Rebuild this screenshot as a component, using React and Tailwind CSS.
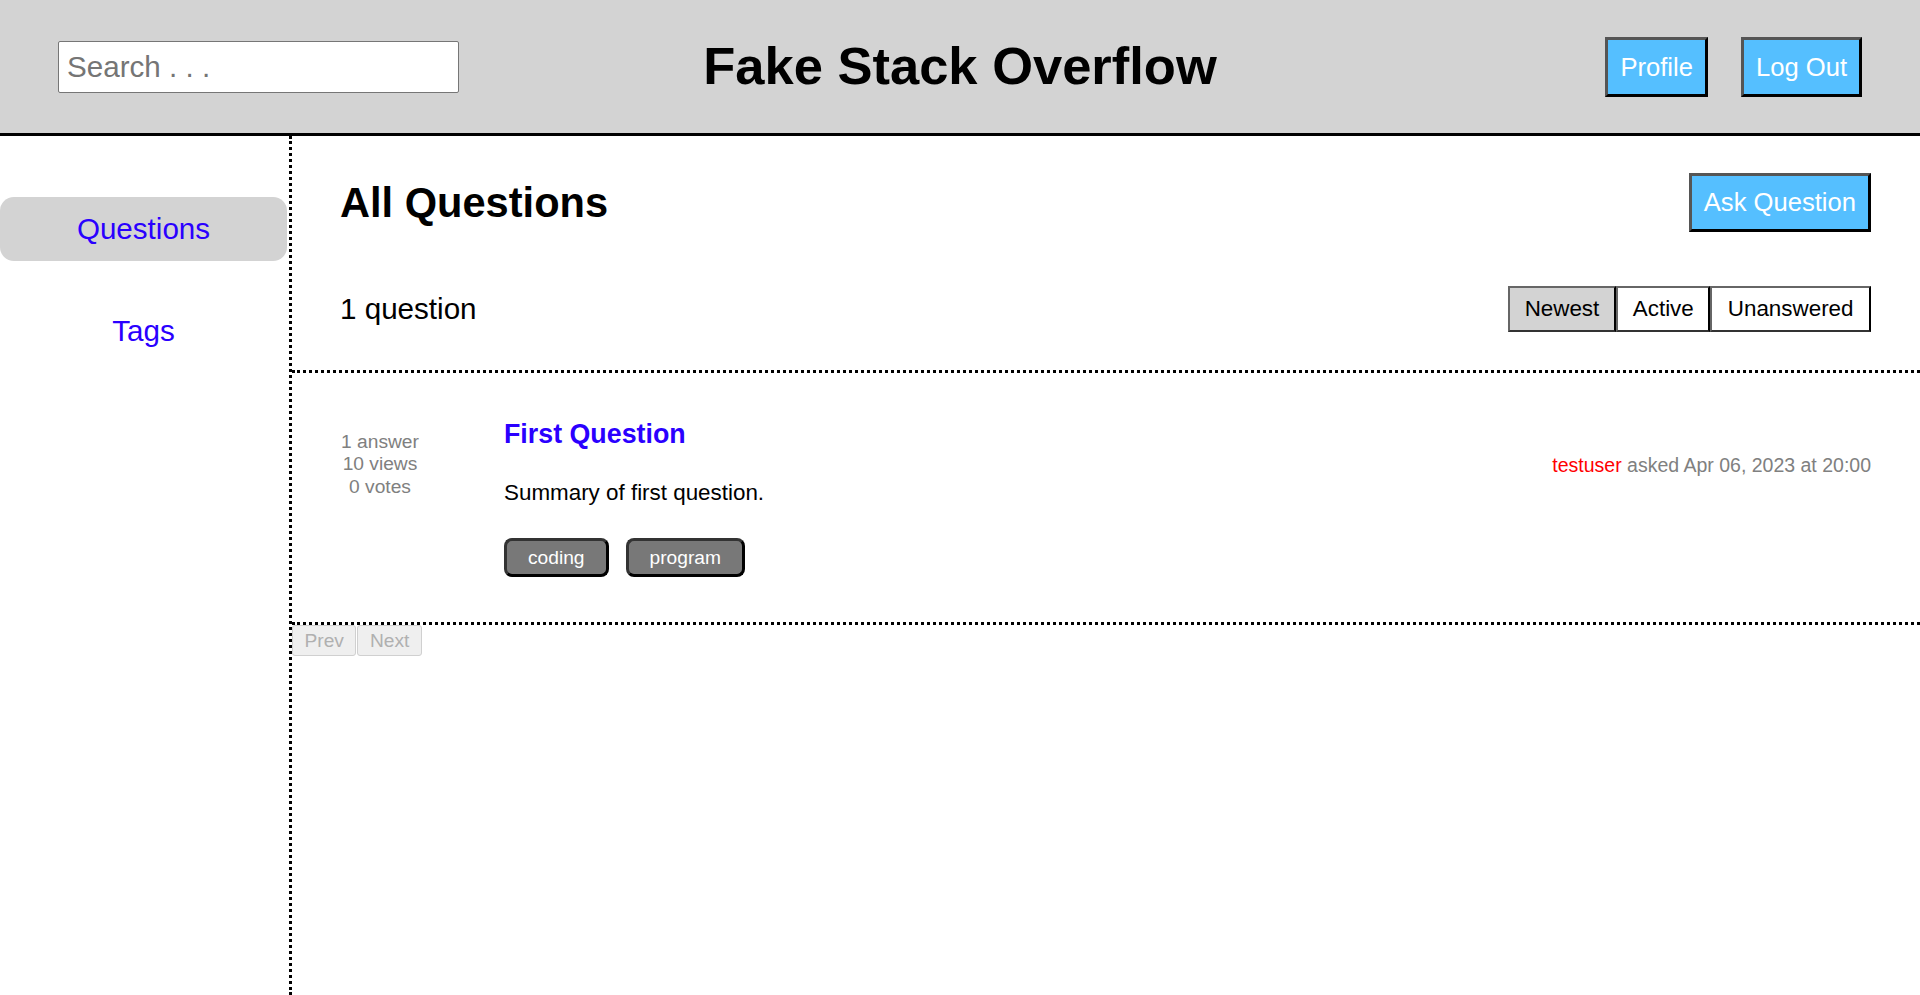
import React from "react";

export default function App() {
  const font = "font-['Liberation_Sans',Arial,sans-serif]";
  return (
    <div className={`min-h-screen flex flex-col bg-white text-black ${font}`}>
      {/* Header */}
      <header className="h-[136px] shrink-0 bg-[#d3d3d3] border-b-[3px] border-black grid grid-cols-[1fr_auto_1fr] items-center px-[58px]">
        <div>
          <input
            type="text"
            placeholder="Search . . ."
            className="w-[401px] h-[52px] bg-white border border-[#767676] rounded-[2px] px-[8px] text-[29.6px] placeholder:text-[#757575] outline-none"
          />
        </div>
        <h1 className="text-[52.5px] font-bold leading-none">Fake Stack Overflow</h1>
        <div className="flex justify-end gap-[33px]">
          <button className="bg-[#55bfff] text-white text-[25.6px] leading-[30px] px-[12px] py-[12px] border-[3px] border-t-[#555] border-l-[#555] border-b-black border-r-black">
            Profile
          </button>
          <button className="bg-[#55bfff] text-white text-[25.6px] leading-[30px] px-[12px] py-[12px] border-[3px] border-t-[#555] border-l-[#555] border-b-black border-r-black">
            Log Out
          </button>
        </div>
      </header>

      <div className="flex flex-1">
        {/* Sidebar */}
        <nav className="w-[292px] shrink-0 border-r-[3px] border-dotted border-black pt-[61px] flex flex-col gap-[38px]">
          <div className="h-[64px] w-[287px] rounded-[14px] bg-[#d3d3d3] flex items-center justify-center text-[29.6px] text-[#2a00ff]">
            Questions
          </div>
          <div className="h-[64px] w-[287px] flex items-center justify-center text-[29.6px] text-[#2a00ff]">
            Tags
          </div>
        </nav>

        {/* Main */}
        <main className="flex-1 flex flex-col">
          <div className="pl-[48px] pr-[49px] pt-[37px] pb-[38px] border-b-[3px] border-dotted border-black">
            <div className="flex items-center justify-between">
              <h2 className="text-[41.6px] font-bold leading-none">All Questions</h2>
              <button className="bg-[#55bfff] text-white text-[25.6px] leading-[29px] px-[12px] py-[12px] border-[3px] border-t-[#555] border-l-[#555] border-b-black border-r-black">
                Ask Question
              </button>
            </div>
            <div className="flex items-center justify-between mt-[54px]">
              <div className="text-[29.6px] leading-none">1 question</div>
              <div className="flex">
                <button className="bg-[#d3d3d3] text-[22.4px] leading-[26px] px-[15px] py-[8px] border-2 border-t-[#666] border-l-[#666] border-r-black border-b-[#333]">
                  Newest
                </button>
                <button className="bg-white text-[22.4px] leading-[26px] px-[14.5px] py-[8px] border-2 border-t-[#666] border-l-[#666] border-r-black border-b-[#333]">
                  Active
                </button>
                <button className="bg-white text-[22.4px] leading-[26px] px-[15.5px] py-[8px] border-2 border-t-[#666] border-l-[#666] border-r-black border-b-[#333]">
                  Unanswered
                </button>
              </div>
            </div>
          </div>

          {/* Question row */}
          <div className="flex items-start pl-[48px] pr-[49px] pt-[45.5px] pb-[45px] border-b-[3px] border-dotted border-black">
            <div className="w-[80px] mt-[12px] text-center text-[#808080] text-[19.2px] leading-[22.5px]">
              <div>1 answer</div>
              <div>10 views</div>
              <div>0 votes</div>
            </div>
            <div className="ml-[84px] flex-1">
              <div className="text-[26.8px] leading-[30px] font-bold text-[#2a00ff]">First Question</div>
              <div className="mt-[31px] text-[22.4px] leading-[26px]">Summary of first question.</div>
              <div className="mt-[32.5px] flex gap-[17px]">
                <span className="bg-[#787878] text-white text-[19.2px] leading-[23px] px-[21px] py-[5px] rounded-[8px] border-[3px] border-t-[#333] border-l-[#333] border-r-black border-b-black">
                  coding
                </span>
                <span className="bg-[#787878] text-white text-[19.2px] leading-[23px] px-[21px] py-[5px] rounded-[8px] border-[3px] border-t-[#333] border-l-[#333] border-r-black border-b-black">
                  program
                </span>
              </div>
            </div>
            <div className="mt-[35px] text-[19.5px] leading-[22px] text-[#808080] whitespace-nowrap">
              <span className="text-[#ff0000]">testuser</span> asked Apr 06, 2023 at 20:00
            </div>
          </div>

          {/* Pagination */}
          <div className="flex gap-[1px]">
            <button disabled className="h-[31px] px-[11.5px] bg-[#efefef] text-[#b0b0b0] text-[19.2px] leading-[22px] border border-[#d0d0d0] rounded-[3px]">
              Prev
            </button>
            <button disabled className="h-[31px] px-[11.5px] bg-[#efefef] text-[#b0b0b0] text-[19.2px] leading-[22px] border border-[#d0d0d0] rounded-[3px]">
              Next
            </button>
          </div>
        </main>
      </div>
    </div>
  );
}
